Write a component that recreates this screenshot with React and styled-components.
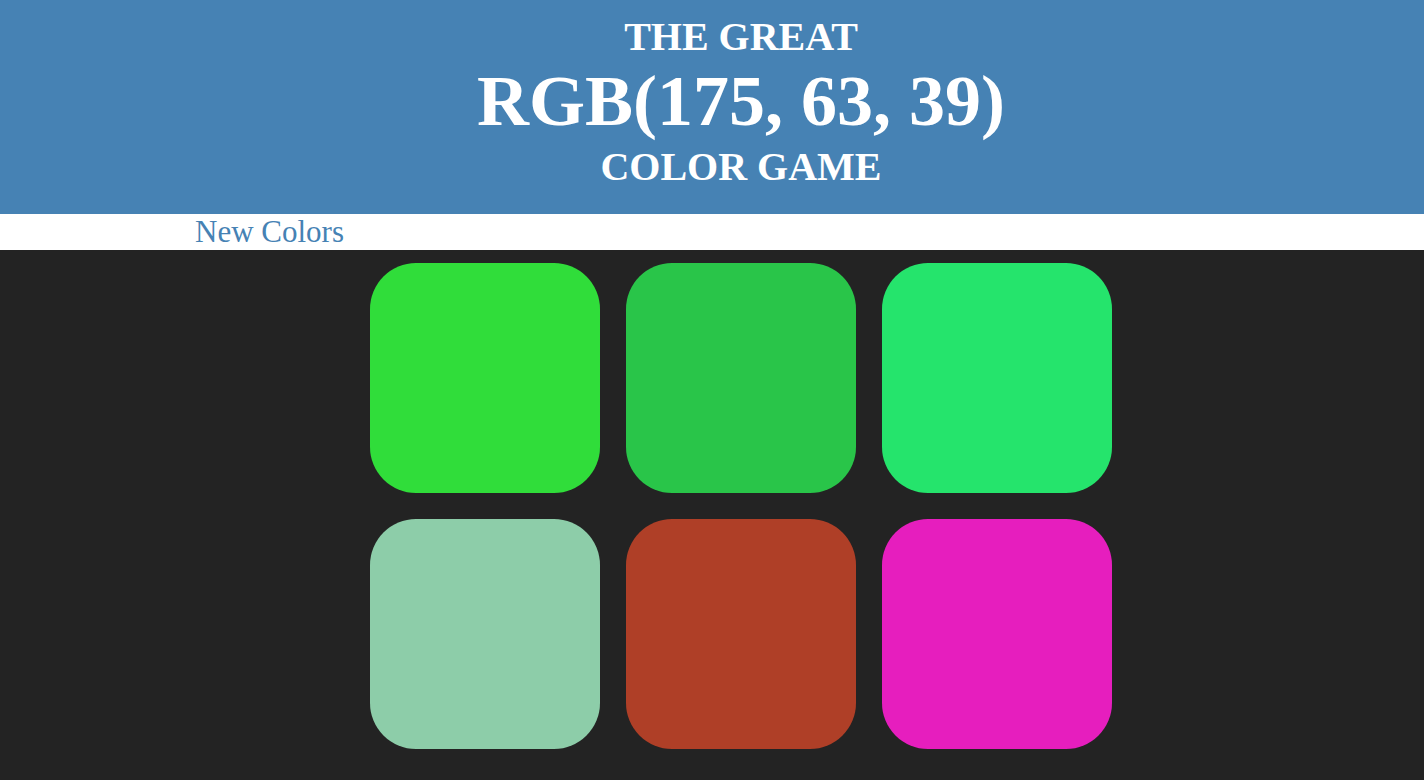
import React from "react";
import styled, { createGlobalStyle } from "styled-components";

const GlobalStyle = createGlobalStyle`
  html, body {
    margin: 0;
    padding: 0;
    overflow-x: hidden;
  }
  body {
    background-color: #232323;
    font-family: "Liberation Serif", "Times New Roman", serif;
  }
`;

const Page = styled.div`
  min-width: 1482px;
`;

const Title = styled.h1`
  margin: 0;
  padding: 13px 0 24px;
  background-color: steelblue;
  color: white;
  text-align: center;
  text-transform: uppercase;
  font-weight: bold;
  line-height: normal;
`;

const Line = styled.span`
  display: block;
  font-size: ${(p) => (p.big ? "72px" : "40px")};
`;

const Stripe = styled.div`
  background: white;
  height: 36px;
  display: flex;
  align-items: center;
  padding-left: 195px;
`;

const NewColors = styled.button`
  border: none;
  background: none;
  padding: 0;
  font-family: "Liberation Serif", "Times New Roman", serif;
  font-size: 31px;
  line-height: 36px;
  color: steelblue;
  cursor: pointer;
`;

const Board = styled.div`
  display: grid;
  grid-template-columns: repeat(3, 230px);
  gap: 26px 26px;
  justify-content: center;
  padding: 13px 0 31px;
`;

const Square = styled.div`
  width: 230px;
  height: 230px;
  border-radius: 20%;
  background-color: ${(p) => p.color};
`;

const colors = [
  "rgb(48, 221, 58)",
  "rgb(41, 197, 73)",
  "rgb(37, 228, 108)",
  "rgb(141, 205, 169)",
  "rgb(175, 63, 39)",
  "rgb(230, 30, 190)",
];

const App = () => {
  return (
    <Page>
      <GlobalStyle />
      <Title>
        <Line>The Great</Line>
        <Line big>RGB(175, 63, 39)</Line>
        <Line>Color Game</Line>
      </Title>

      <Stripe>
        <NewColors>New Colors</NewColors>
      </Stripe>

      <Board>
        {colors.map((c, i) => (
          <Square key={i} color={c} />
        ))}
      </Board>
    </Page>
  );
};

export default App;
